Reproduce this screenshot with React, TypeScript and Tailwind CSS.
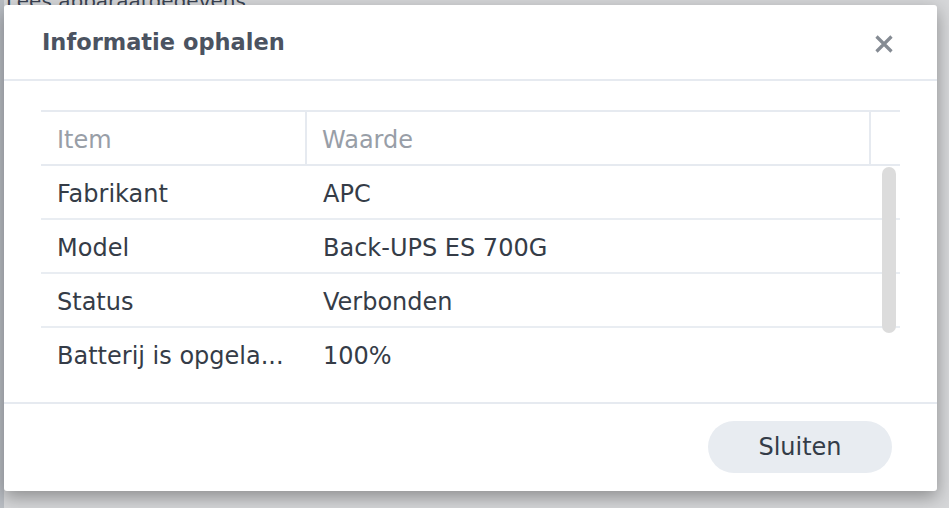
import React from "react";

const rows: [string, string][] = [
  ["Fabrikant", "APC"],
  ["Model", "Back-UPS ES 700G"],
  ["Status", "Verbonden"],
  ["Batterij is opgela...", "100%"],
];

export default function App() {
  return (
    <div
      className="relative w-[949px] h-[508px] overflow-hidden bg-[#d6d7d9]"
      style={{ fontFamily: '"DejaVu Sans", Verdana, sans-serif' }}
    >
      <div className="absolute left-0 top-[-14px] pl-[6px] text-[20px] text-[#3a4352] whitespace-nowrap">
        Lees apparaatgegevens
      </div>
      <div className="absolute left-0 top-0 w-[4px] h-full bg-[#b9bdc3]" />

      <div className="absolute left-[4px] top-[5px] w-[933px] h-[486px] bg-white rounded-[3px] shadow-[0_6px_18px_rgba(0,0,0,0.35)] flex flex-col">
        {/* header */}
        <div className="h-[76px] shrink-0 border-b-2 border-[#e6eaf0] flex items-center justify-between pl-[38px] pr-[44px] pt-[2px]">
          <div className="text-[22.5px] font-bold text-[#4b5361]">
            Informatie ophalen
          </div>
          <svg width="18" height="18" viewBox="0 0 18 18" className="mt-[1px]">
            <path d="M1.5 1.5 L16.5 16.5 M16.5 1.5 L1.5 16.5" stroke="#858b93" strokeWidth="3.2" strokeLinecap="butt" />
          </svg>
        </div>

        {/* body */}
        <div className="flex-1 pt-[29px] px-[37px]">
          <div className="border-t-2 border-[#e6eaf0]">
            <div className="flex h-[54px] border-b-2 border-[#e6eaf0] text-[24px] text-[#989ea7]">
              <div className="w-[266px] border-r-2 border-[#e6eaf0] pl-[16px] pt-[4px] flex items-center">Item</div>
              <div className="flex-1 border-r-2 border-[#e6eaf0] pl-[15px] pt-[4px] flex items-center">Waarde</div>
              <div className="w-[29px]" />
            </div>
            <div className="relative h-[214px] overflow-hidden">
              {rows.map(([k, v]) => (
                <div
                  key={k}
                  className="flex h-[54px] border-b-2 border-[#e9edf2] text-[24px] text-[#353c47]"
                >
                  <div className="w-[266px] pl-[16px] pt-[4px] flex items-center whitespace-nowrap">{k}</div>
                  <div className="flex-1 pl-[16px] pt-[4px] flex items-center whitespace-nowrap">{v}</div>
                </div>
              ))}
              <div className="absolute right-[4px] top-[1px] w-[14px] h-[166px] rounded-full bg-[#dcdcdc]" />
            </div>
          </div>
        </div>

        {/* footer */}
        <div className="h-[89px] shrink-0 border-t-2 border-[#e6eaf0] flex items-start justify-end pr-[45px] pt-[17px]">
          <button className="w-[184px] h-[52px] rounded-full bg-[#e8ecf1] text-[24px] text-[#343c48]">
            Sluiten
          </button>
        </div>
      </div>
    </div>
  );
}
